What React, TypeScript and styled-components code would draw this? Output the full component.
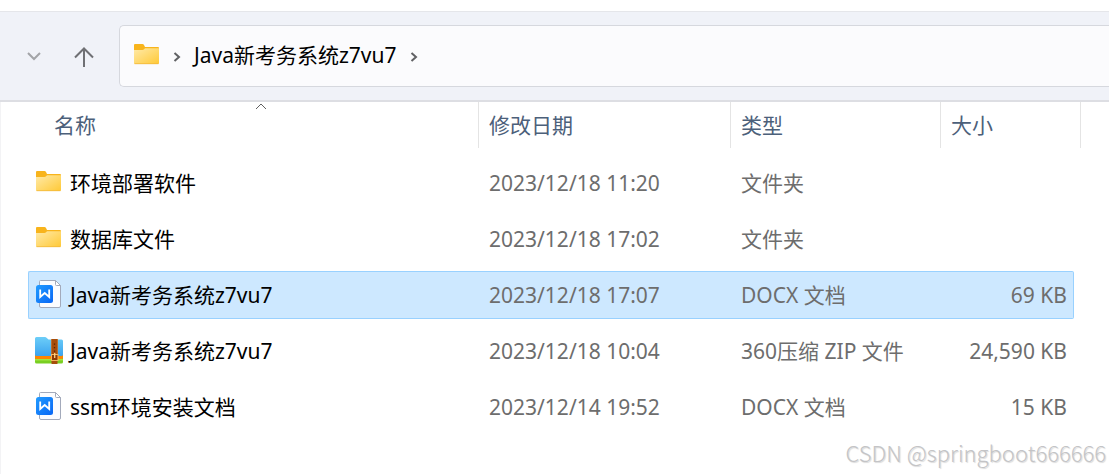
import React from "react";
import styled, { createGlobalStyle, css } from "styled-components";

const GlobalStyle = createGlobalStyle`
  *, *::before, *::after { box-sizing: border-box; }
  body {
    margin: 0;
    background: #ffffff;
    color: #000000;
    font-family: "Noto Sans", "Noto Sans CJK SC", sans-serif;
    font-size: 21px;
    line-height: 28px;
  }
  button { font: inherit; color: inherit; background: none; border: 0; padding: 0; }
  svg { display: block; }
`;

const Window = styled.div`
  position: relative;
  display: flex;
  flex-direction: column;
  min-height: 100vh;
  padding-top: 11px;
  overflow: hidden;
`;

const Toolbar = styled.header`
  display: flex;
  align-items: center;
  flex: none;
  height: 91px;
  padding-left: 20px;
  background: #f0f2f8;
  border-top: 1px solid #e5e6ea;
  border-bottom: 2px solid #dddee3;
`;

const NavButton = styled.button<{ $wide?: boolean }>`
  display: flex;
  align-items: center;
  justify-content: center;
  flex: none;
  width: ${(p) => (p.$wide ? 71 : 28)}px;
  height: 40px;
`;

const AddressBar = styled.nav`
  display: flex;
  align-items: center;
  flex: 1;
  height: 62px;
  padding: 0 0 2px 14px;
  background: #fbfbfd;
  border: 1px solid #d6d8de;
  border-right: 0;
  border-radius: 5px 0 0 5px;
`;

const Separator = styled.span`
  display: flex;
  justify-content: center;
  width: 34px;
  padding-top: 4px;
`;

const Crumb = styled.a`
  color: #000000;
  text-decoration: none;
  white-space: nowrap;
`;

const Listing = styled.main`
  flex: 1;
  padding: 0 28px 0 27px;
  border-left: 1px solid #f3f3f5;
`;

const FileTable = styled.table`
  width: 100%;
  min-width: 900px;
  table-layout: fixed;
  border-spacing: 0;
`;

const HeaderCell = styled.th<{ $width?: number }>`
  width: ${(p) => (p.$width ? `${p.$width}px` : "auto")};
  padding: 0 0 7px;
  font-weight: 400;
  text-align: left;
`;

const HeaderButton = styled.button<{ $first?: boolean }>`
  position: relative;
  display: block;
  width: ${(p) => (p.$first ? "calc(100% - 16px)" : "100%")};
  height: 46px;
  margin-left: ${(p) => (p.$first ? 16 : 0)}px;
  padding: 0 10px;
  border-right: 1px solid #e4e4e4;
  color: #4c607a;
  text-align: left;
`;

const SortMark = styled.span`
  position: absolute;
  top: 1px;
  left: 50%;
  transform: translateX(-50%);
`;

const Cell = styled.td`
  padding: 4px 0;
`;

const CellBody = styled.div<{
  $selected?: boolean;
  $edge?: "start" | "end";
}>`
  display: flex;
  align-items: center;
  height: 48px;
  padding: 0 10px;
  color: #6d6d6d;
  white-space: nowrap;
  border: 0 solid transparent;
  border-width: 1px 0;
  ${(p) =>
    p.$edge === "start" &&
    css`
      gap: 7px;
      padding: 0 6px;
      color: #000000;
      border-left-width: 1px;
      border-radius: 2px 0 0 2px;
    `}
  ${(p) =>
    p.$edge === "end" &&
    css`
      justify-content: flex-end;
      margin-right: 7px;
      padding: 0 6px;
      border-right-width: 1px;
      border-radius: 0 2px 2px 0;
    `}
  ${(p) =>
    p.$selected &&
    css`
      background: #cde8ff;
      border-color: #99d1ff;
    `}
`;

const IconSlot = styled.span`
  flex: none;
  width: 28px;
  height: 32px;
`;

const Watermark = styled.footer`
  position: absolute;
  right: 3px;
  bottom: 8px;
  color: #c4c4c6;
  font-family: "Noto Sans CJK SC", sans-serif;
  font-size: 22px;
  font-weight: 300;
  text-shadow: 1px 1px 1px #dadada;
`;

const FolderArt = () => (
  <>
    <path d="M2 1H9.500Q10.500 1 11 2L12 4H25Q26 4 26 5V12H1V2Q1 1 2 1Z" fill="#f8b41c" />
    <path d="M1 7H9.500Q11 7 12 5.200H26V20Q26 21 25 21H2Q1 21 1 20Z" fill="url(#folderFill)" />
    <path d="M1.500 20.700H25.500" stroke="#f1b83a" strokeWidth="0.800" />
  </>
);

const FolderIcon = () => (
  <svg width="28" height="30" viewBox="0 -3 28 30" aria-hidden="true">
    <FolderArt />
  </svg>
);

const CrumbFolder = () => (
  <svg width="26" height="22" viewBox="1 1 26 22" aria-hidden="true">
    <FolderArt />
  </svg>
);

const DocIcon = () => (
  <svg width="28" height="30" viewBox="0 0 28 30" aria-hidden="true">
    <path d="M5.500 1.500H20.500L25.500 6.500V27Q25.500 28.500 24 28.500H6Q4.500 28.500 4.500 27V2.500Q4.500 1.500 5.500 1.500Z" fill="#fbfcff" stroke="#a3aabb" />
    <path d="M20.500 1.500V5.500Q20.500 6.500 21.500 6.500H25.500Z" fill="#ffffff" stroke="#a3aabb" />
    <rect x="1" y="6" width="17" height="18" rx="2.500" fill="url(#docFill)" />
    <path d="M5.200 10.500V18L9.700 14L14.200 18V10.500" fill="none" stroke="#ffffff" strokeWidth="1.800" />
  </svg>
);

const ZipIcon = () => (
  <svg width="28" height="30" viewBox="0 0 28 30" aria-hidden="true">
    <rect x="0" y="17" width="28" height="11.500" rx="1.500" fill="#79cf22" />
    <path d="M0 24H28V25.500H0Z" fill="#a4e441" />
    <path d="M0 17H28V22.500Q28 24 26.500 24H1.500Q0 24 0 22.500Z" fill="#ff8500" />
    <path d="M0 3.500Q0 2 1.500 2H10Q11 2 11.500 2.700L13.500 4.500H26.500Q28 4.500 28 6V19.500Q28 21 26.500 21H1.500Q0 21 0 19.500Z" fill="url(#zipFill)" />
    <rect x="16.500" y="4" width="6" height="25" rx="0.500" fill="#a64d0c" />
    <path d="M16.500 4V20M22.500 4V20" stroke="#c56a1c" strokeWidth="0.800" />
    <path d="M19.500 8.500V9.700M19.500 12V13.200M19.500 15.500V16.700" stroke="#572502" strokeWidth="1.300" />
    <rect x="16.500" y="19.500" width="6.500" height="6" fill="#8b3a05" stroke="#f1b560" />
    <path d="M19.700 18V23" stroke="#ffd183" strokeWidth="1.300" />
  </svg>
);

const SharedFills = () => (
  <svg width="0" height="0" aria-hidden="true">
    <defs>
      <linearGradient id="folderFill" x1="0" y1="0" x2="1" y2="1">
        <stop offset="0" stopColor="#ffeaa9" />
        <stop offset="1" stopColor="#ffc936" />
      </linearGradient>
      <linearGradient id="docFill" x1="0" y1="0" x2="1" y2="1">
        <stop offset="0" stopColor="#229cff" />
        <stop offset="1" stopColor="#0866f5" />
      </linearGradient>
      <linearGradient id="zipFill" x1="0" y1="0" x2="0" y2="1">
        <stop offset="0" stopColor="#6dcef8" />
        <stop offset="1" stopColor="#3ba3ef" />
      </linearGradient>
    </defs>
  </svg>
);

const CrumbArrow = () => (
  <svg width="8" height="12" viewBox="0 0 8 12" fill="none" stroke="#606164" strokeWidth="2" aria-hidden="true">
    <path d="M1.500 2L6 6L1.500 10" />
  </svg>
);

const icons = { folder: FolderIcon, doc: DocIcon, zip: ZipIcon };

type FileEntry = {
  icon: keyof typeof icons;
  name: string;
  modified: string;
  kind: string;
  size?: string;
  selected?: boolean;
};

const files: FileEntry[] = [
  { icon: "folder", name: "环境部署软件", modified: "2023/12/18 11:20", kind: "文件夹" },
  { icon: "folder", name: "数据库文件", modified: "2023/12/18 17:02", kind: "文件夹" },
  { icon: "doc", name: "Java新考务系统z7vu7", modified: "2023/12/18 17:07", kind: "DOCX 文档", size: "69 KB", selected: true },
  { icon: "zip", name: "Java新考务系统z7vu7", modified: "2023/12/18 10:04", kind: "360压缩 ZIP 文件", size: "24,590 KB" },
  { icon: "doc", name: "ssm环境安装文档", modified: "2023/12/14 19:52", kind: "DOCX 文档", size: "15 KB" },
];

const FileRow = ({ file }: { file: FileEntry }) => {
  const Icon = icons[file.icon];
  return (
    <tr aria-selected={file.selected}>
      <Cell>
        <CellBody $edge="start" $selected={file.selected}>
          <IconSlot><Icon /></IconSlot>
          <span>{file.name}</span>
        </CellBody>
      </Cell>
      <Cell><CellBody $selected={file.selected}>{file.modified}</CellBody></Cell>
      <Cell><CellBody $selected={file.selected}>{file.kind}</CellBody></Cell>
      <Cell><CellBody $edge="end" $selected={file.selected}>{file.size}</CellBody></Cell>
    </tr>
  );
};

export default function App() {
  return (
    <Window lang="zh-CN">
      <GlobalStyle />
      <Toolbar>
        <NavButton aria-label="最近浏览的位置">
          <svg width="14" height="10" viewBox="0 0 14 10" fill="none" stroke="#a3a4a8" strokeWidth="2">
            <path d="M1 2L7 8L13 2" />
          </svg>
        </NavButton>
        <NavButton $wide aria-label="向上">
          <svg width="20" height="22" viewBox="0 0 20 22" fill="none" stroke="#6f7074" strokeWidth="2">
            <path d="M10 22V3M1 12.500L10 3.500L19 12.500" />
          </svg>
        </NavButton>
        <AddressBar aria-label="地址">
          <CrumbFolder />
          <Separator><CrumbArrow /></Separator>
          <Crumb href="#">Java新考务系统z7vu7</Crumb>
          <Separator><CrumbArrow /></Separator>
        </AddressBar>
      </Toolbar>
      <Listing>
        <FileTable>
          <thead>
            <tr>
              <HeaderCell aria-sort="ascending">
                <HeaderButton $first>
                  名称
                  <SortMark>
                    <svg width="12" height="7" viewBox="0 0 12 7" fill="none" stroke="#606060" aria-hidden="true">
                      <path d="M1 6L6 1L11 6" />
                    </svg>
                  </SortMark>
                </HeaderButton>
              </HeaderCell>
              <HeaderCell $width={252}><HeaderButton>修改日期</HeaderButton></HeaderCell>
              <HeaderCell $width={210}><HeaderButton>类型</HeaderButton></HeaderCell>
              <HeaderCell $width={140}><HeaderButton>大小</HeaderButton></HeaderCell>
            </tr>
          </thead>
          <tbody>
            {files.map((file) => (
              <FileRow key={file.icon + file.name} file={file} />
            ))}
          </tbody>
        </FileTable>
      </Listing>
      <SharedFills />
      <Watermark>CSDN @springboot666666</Watermark>
    </Window>
  );
}
